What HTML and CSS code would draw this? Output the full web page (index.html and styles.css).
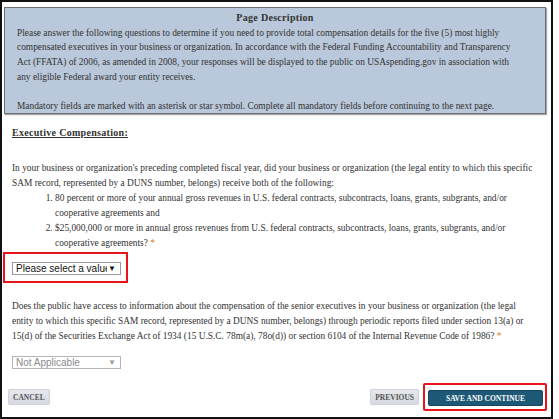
FILE: index.html
```html
<!DOCTYPE html>
<html lang="en">
<head>
<meta charset="utf-8">
<title>Executive Compensation</title>
<link rel="stylesheet" href="styles.css">
</head>
<body>
<div class="frame">
  <div class="desc">
    <div class="desc-title">Page Description</div>
    <p class="desc-text">Please answer the following questions to determine if you need to provide total compensation details for the five (5) most highly compensated executives in your business or organization. In accordance with the Federal Funding Accountability and Transparency<br>Act (FFATA) of 2006, as amended in 2008, your responses will be displayed to the public on USAspending.gov in association with any eligible Federal award your entity receives.</p>
    <p class="desc-text desc-gap">Mandatory fields are marked with an asterisk or star symbol. Complete all mandatory fields before continuing to the next page.</p>
  </div>
  <div class="main">
    <h2 class="section-title">Executive Compensation:</h2>
    <p class="question">In your business or organization's preceding completed fiscal year, did your business or organization (the legal entity to which this specific SAM record, represented by a DUNS number, belongs) receive both of the following:</p>
    <ol class="criteria">
      <li>80 percent or more of your annual gross revenues in U.S. federal contracts, subcontracts, loans, grants, subgrants, and/or cooperative agreements and</li>
      <li>$25,000,000 or more in annual gross revenues from U.S. federal contracts, subcontracts, loans, grants, subgrants, and/or cooperative agreements? <span class="req">*</span></li>
    </ol>
    <div class="highlight highlight-select">
      <div class="select">
        <span class="select-value">Please select a value</span>
        <span class="select-arrow">&#9660;</span>
      </div>
    </div>
    <p class="question question-2">Does the public have access to information about the compensation of the senior executives in your business or organization (the legal entity to which this specific SAM record, represented by a DUNS number, belongs) through periodic reports filed under section 13(a) or 15(d) of the Securities Exchange Act of 1934 (15 U.S.C. 78m(a), 78o(d)) or section 6104 of the Internal Revenue Code of 1986? <span class="req">*</span></p>
    <div class="select select-disabled">
      <span class="select-value">Not Applicable</span>
      <span class="select-arrow">&#9660;</span>
    </div>
  </div>
  <div class="actions">
    <button class="btn btn-light">CANCEL</button>
    <div class="actions-right">
      <button class="btn btn-light">PREVIOUS</button>
      <div class="highlight highlight-btn">
        <button class="btn btn-primary">SAVE AND CONTINUE</button>
      </div>
    </div>
  </div>
</div>
</body>
</html>
```

FILE: styles.css
```css
* { box-sizing: border-box; }
html, body { margin: 0; padding: 0; background: #fff; }
body {
  font-family: "Liberation Serif", "Times New Roman", serif;
  color: #333;
  font-size: 9.4px;
}
.frame {
  width: 553px;
  height: 419px;
  border: 2px solid #111;
  display: flex;
  flex-direction: column;
}
.desc {
  margin: 5px 5px 0 2px;
  background: #b9c8da;
  border: 1px solid #6b6f74;
  box-shadow: 1px 1px 1px rgba(0,0,0,0.35);
  padding: 3px 24px 0 12px;
  line-height: 14.7px;
  height: 107px;
}
.desc-title {
  text-align: center;
  font-weight: bold;
  font-size: 10px;
  letter-spacing: 0.3px;
  padding-left: 12px;
}
.desc-text { margin: 0; }
.desc-gap { margin-top: 14.7px; }
.main {
  padding: 0 3px 0 10px;
  line-height: 15px;
}
.section-title {
  font-size: 10px;
  letter-spacing: 0.3px;
  font-weight: bold;
  text-decoration: underline;
  margin: 11px 0 0 0;
  line-height: 15px;
}
.question { margin: 21px 0 0 0; }
.question-2 {
  margin-top: 16px;
  padding-right: 17px;
}
.criteria {
  margin: 0;
  padding-left: 43px;
}
.req { color: #e07b2a; }
.highlight { border: 2px solid #e8141b; }
.highlight-select {
  width: 125px;
  margin: 1px 0 0 -9px;
  padding: 8px 0 6px 7px;
}
.select {
  width: 109px;
  height: 13px;
  border: 1px solid #9a9a9a;
  background: #fff;
  display: flex;
  align-items: center;
  justify-content: space-between;
  font-family: "Liberation Sans", Arial, sans-serif;
  font-size: 10px;
  line-height: 11px;
  color: #111;
  padding: 0 4px 0 3px;
  overflow: hidden;
}
.select-value {
  white-space: nowrap;
  overflow: hidden;
  width: 91px;
}
.select-arrow { font-size: 8px; color: #111; }
.select-disabled {
  margin-top: 12px;
  color: #8a8a8a;
  border-color: #b5b5b5;
}
.select-disabled .select-arrow { color: #999; }
.actions {
  margin-top: 14px;
  padding: 0 4px 0 6px;
  display: flex;
  align-items: center;
  justify-content: space-between;
}
.actions-right {
  display: flex;
  align-items: center;
  gap: 4px;
}
.btn {
  font-family: "Liberation Serif", "Times New Roman", serif;
  font-weight: bold;
  font-size: 7.5px;
  height: 16px;
  padding: 0 4px;
  border-radius: 2px;
  cursor: pointer;
}
.btn-light {
  background: linear-gradient(#e6e8ec, #d6dae0);
  border: 1px solid #cfd3d9;
  color: #555;
  box-shadow: 0 0 1px rgba(0,0,0,0.15);
}
.btn-primary {
  background: #1d5877;
  border: 1px solid #16465f;
  color: #fff;
  width: 115px;
}
.highlight-btn {
  padding: 5px 2px 3px 3px;
  border-radius: 2px;
}
```
